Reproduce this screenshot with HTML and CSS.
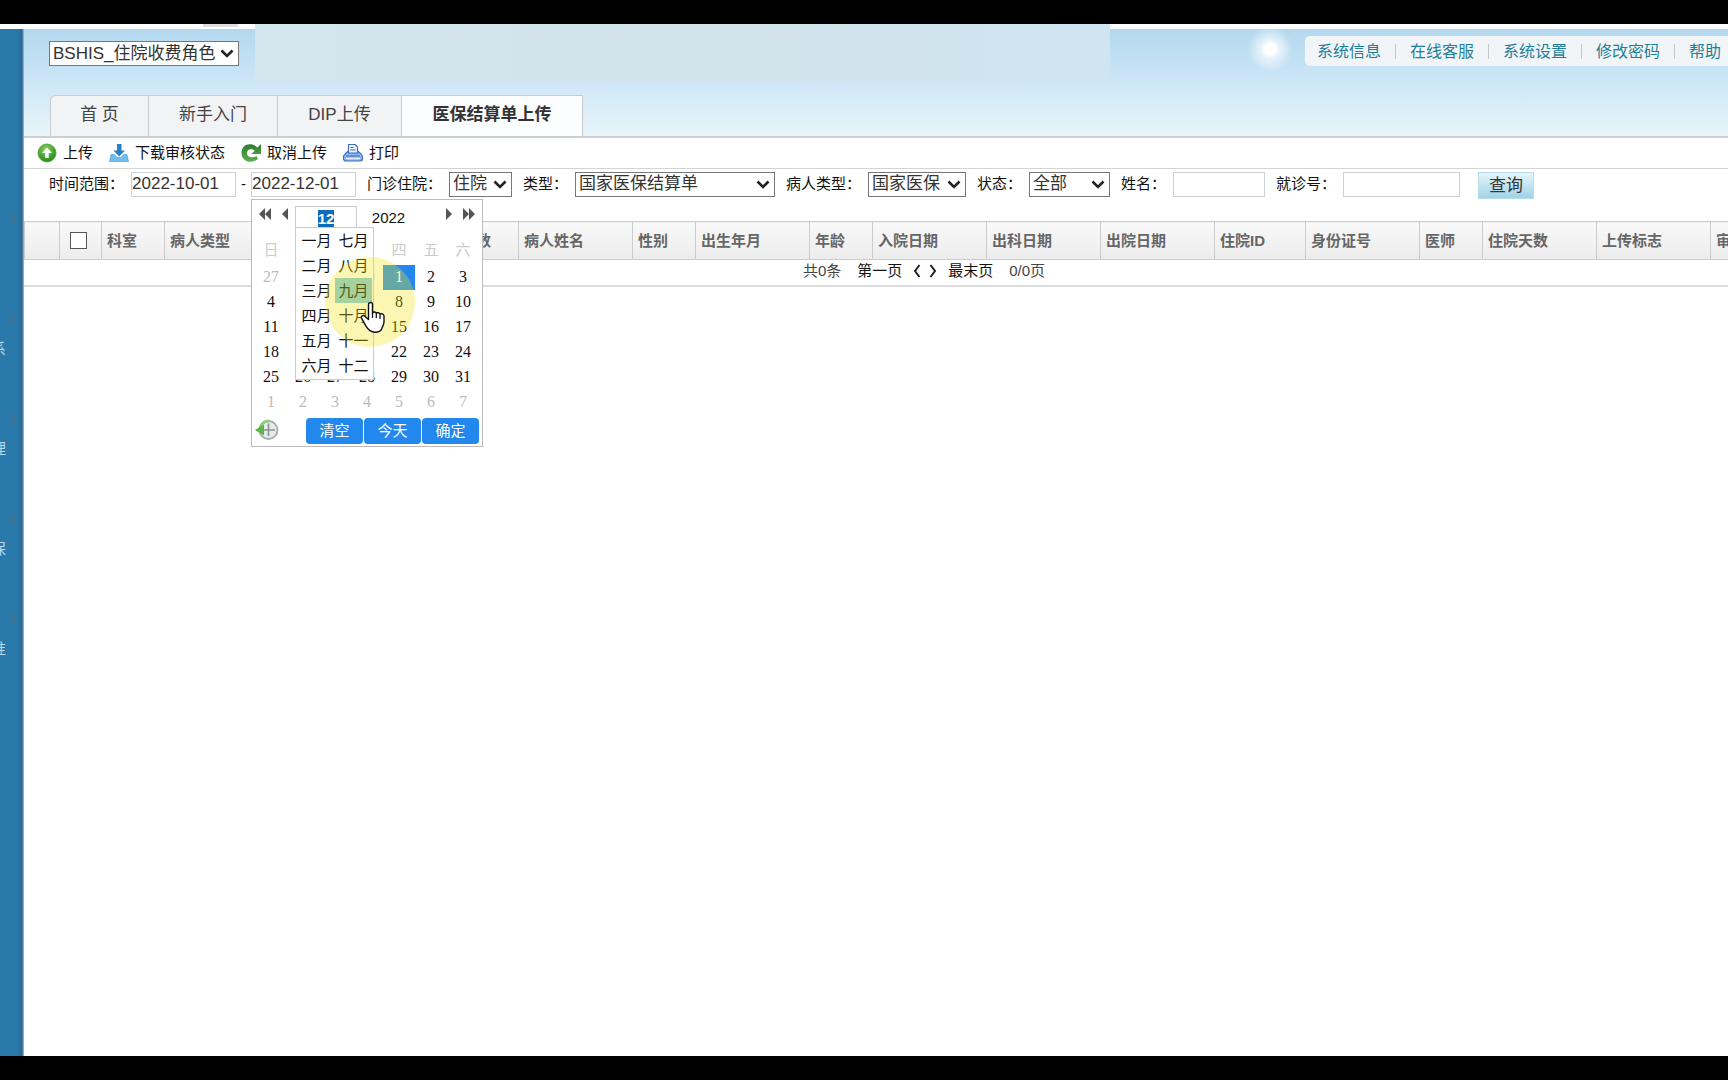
FILE: index.html
```html
<!DOCTYPE html>
<html lang="zh-CN">
<head>
<meta charset="utf-8">
<title>医保结算单上传</title>
<link rel="stylesheet" href="styles.css">
</head>
<body>
<div class="screen">
  <div class="strip"><span class="strip-tab"></span></div>
  <div class="shell">
    <nav class="side" aria-label="侧栏">
      <a href="#" class="side-item" aria-label="首页"></a>
      <a href="#" class="side-item"><span>系</span></a>
      <a href="#" class="side-item"><span>理</span></a>
      <a href="#" class="side-item"><span>保</span></a>
      <a href="#" class="side-item"><span>准</span></a>
    </nav>
    <main class="main">
      <header class="top">
        <div class="haze"></div>
        <div class="flare"></div>
        <div class="top-row">
          <select class="select role" aria-label="角色"><option>BSHIS_住院收费角色</option></select>
          <nav class="links" aria-label="系统">
            <a href="#">系统信息</a><a href="#">在线客服</a><a href="#">系统设置</a><a href="#">修改密码</a><a href="#">帮助</a>
          </nav>
        </div>
        <nav class="tabs" aria-label="页签">
          <a href="#" class="tab tab-home">首 页</a>
          <a href="#" class="tab tab-guide">新手入门</a>
          <a href="#" class="tab tab-dip">DIP上传</a>
          <a href="#" class="tab tab-on">医保结算单上传</a>
        </nav>
      </header>
      <div class="tools">
        <button type="button" class="tool">
          <svg viewBox="0 0 20 20"><defs><radialGradient id="g1" cx=".45" cy=".3" r=".8"><stop offset="0" stop-color="#8fd65a"/><stop offset=".6" stop-color="#3fa02c"/><stop offset="1" stop-color="#2a7d20"/></radialGradient></defs><circle cx="10" cy="10" r="9" fill="url(#g1)" stroke="#5aa84a"/><path d="M10 4.500 15 10h-3.300v5H8.300v-5H5z" fill="#fff"/></svg>上传</button>
        <button type="button" class="tool">
          <svg viewBox="0 0 20 20"><path d="M2 11.500h3.500L8 14.500h4l2.500-3H18l1.500 7H.5z" fill="#6fc0ee" stroke="#3a98d4" stroke-width=".6"/><path d="M8 1h4.500v6.500H16l-5.800 6L4.500 7.500H8z" fill="#2a80c8"/></svg>下载审核状态</button>
        <button type="button" class="tool">
          <svg viewBox="0 0 20 20"><defs><linearGradient id="g2" x1="0" y1="0" x2="0" y2="1"><stop offset="0" stop-color="#2c7a2e"/><stop offset="1" stop-color="#5db04f"/></linearGradient></defs><path d="M20 1v10h-9.500l3.200-3.300C10 4.800 5.800 6.800 6 10.500c.3 4 5.500 5 9.500 2.500l1.500 3C10 21.500.5 18.500.5 10 .5 1.500 10-1.500 16.500 4.500z" fill="url(#g2)"/></svg>取消上传</button>
        <button type="button" class="tool">
          <svg viewBox="0 0 20 20" stroke="#3f6fc0" stroke-width="1.200" stroke-linejoin="round"><path d="M2.500 10.500 5.500 8h9l3 2.500L19.500 13v3.500L18 18H2L.5 16.500V13z" fill="#8fb4ee"/><path d="M5.500 10V1.500h6.500L14.500 4v6z" fill="#eef5ff"/><path d="M7.500 4.500h3M7.500 7h5M3 13h14" fill="none"/><path d="M3 15.500h14" stroke="#e5effd" stroke-width="1.500"/></svg>打印</button>
      </div>
      <form class="filters">
        <div class="range">
          <div class="field"><label for="from">时间范围：</label><input id="from" class="box w-date" value="2022-10-01"></div>
          <span class="dash">-</span>
          <div class="picker">
            <input id="to" class="box w-date" value="2022-12-01" aria-label="结束日期">
            <div class="cal">
              <div class="cal-head">
                <button type="button" class="arrow" aria-label="上一年"><svg viewBox="0 0 12 12"><path d="M6 0v12L0 6zM12 0v12L6 6z"/></svg></button>
                <button type="button" class="arrow" aria-label="上一月"><svg viewBox="0 0 12 12"><path d="M9 0v12L3 6z"/></svg></button>
                <div class="month"><span class="month-val">12</span>
                  <div class="months">
                    <button type="button">一月</button><button type="button">七月</button>
                    <button type="button">二月</button><button type="button">八月</button>
                    <button type="button">三月</button><button type="button" class="hot">九月</button>
                    <button type="button">四月</button><button type="button">十月</button>
                    <button type="button">五月</button><button type="button">十一</button>
                    <button type="button">六月</button><button type="button">十二</button>
                  </div>
                </div>
                <span class="year">2022</span>
                <button type="button" class="arrow" aria-label="下一月"><svg viewBox="0 0 12 12"><path d="M3 0v12l6-6z"/></svg></button>
                <button type="button" class="arrow" aria-label="下一年"><svg viewBox="0 0 12 12"><path d="M0 0v12l6-6zM6 0v12l6-6z"/></svg></button>
              </div>
              <table class="days">
                <thead><tr><th>日</th><th>一</th><th>二</th><th>三</th><th>四</th><th>五</th><th>六</th></tr></thead>
                <tbody>
                  <tr><td class="dim">27</td><td class="dim">28</td><td class="dim">29</td><td class="dim">30</td><td class="sel">1</td><td>2</td><td>3</td></tr>
                  <tr><td>4</td><td>5</td><td>6</td><td>7</td><td>8</td><td>9</td><td>10</td></tr>
                  <tr><td>11</td><td>12</td><td>13</td><td>14</td><td>15</td><td>16</td><td>17</td></tr>
                  <tr><td>18</td><td>19</td><td>20</td><td>21</td><td>22</td><td>23</td><td>24</td></tr>
                  <tr><td>25</td><td>26</td><td>27</td><td>28</td><td>29</td><td>30</td><td>31</td></tr>
                  <tr class="dim"><td>1</td><td>2</td><td>3</td><td>4</td><td>5</td><td>6</td><td>7</td></tr>
                </tbody>
              </table>
              <div class="cal-foot">
                <svg class="clock" viewBox="0 0 24 22"><circle cx="13.500" cy="11" r="9" fill="#e6eaea" stroke="#a9afaf" stroke-width="2"/><path d="M13.500 4.500V17M8 11h12" fill="none" stroke="#8a9494" stroke-width="1.600"/><path d="M14 2A9 9 0 0 0 5.500 8" fill="none" stroke="#8fce7c" stroke-width="3"/><path d="M0 11 9 5.500v11z" fill="#58b545"/></svg>
                <button type="button">清空</button><button type="button">今天</button><button type="button">确定</button>
              </div>
              <div class="halo"></div>
              <svg class="hand" viewBox="0 0 26 32"><path d="M8.500 3.500a2 2 0 0 1 4 0V12c.5-1.500 3.500-1.300 3.800.4.800-1.200 3.400-.8 3.700.9 1-1 3.800-.6 4 1.400v6c0 3-1.500 4.500-2 6.500-1 3-3.500 4-7 4-5 0-7-2.500-9-6l-4.500-8c-.8-2 1.500-3.500 3.300-2l3.700 3.300z" fill="#fff" stroke="#111" stroke-width="1.400" stroke-linejoin="round"/><path d="M12.500 12v5M16.300 13v4M20 14v4" stroke="#111" stroke-width="1.300"/></svg>
            </div>
          </div>
        </div>
        <div class="field"><label for="kind">门诊住院：</label><select id="kind" class="select w-kind"><option>住院</option></select></div>
        <div class="field"><label for="type">类型：</label><select id="type" class="select w-type"><option>国家医保结算单</option></select></div>
        <div class="field"><label for="ptype">病人类型：</label><select id="ptype" class="select w-ptype"><option>国家医保</option></select></div>
        <div class="field"><label for="state">状态：</label><select id="state" class="select w-state"><option>全部</option></select></div>
        <div class="field"><label for="name">姓名：</label><input id="name" class="box w-name"></div>
        <div class="field"><label for="visit">就诊号：</label><input id="visit" class="box w-visit"></div>
        <button type="button" class="query">查询</button>
      </form>
      <div class="grid-wrap">
        <table class="grid">
          <colgroup><col class="c-num"><col class="c-check"><col class="c-2"><col class="c-4"><col class="c-4"><col class="c-2"><col class="c-2"><col class="c-4"><col class="c-2"><col class="c-4"><col class="c-2"><col class="c-4"><col class="c-4"><col class="c-4"><col class="c-id"><col class="c-4"><col class="c-2"><col class="c-4"><col class="c-4"><col class="c-4"></colgroup>
          <thead><tr><th></th><th><input type="checkbox" class="check" aria-label="全选"></th><th>科室</th><th>病人类型</th><th></th><th></th><th>次数</th><th>病人姓名</th><th>性别</th><th>出生年月</th><th>年龄</th><th>入院日期</th><th>出科日期</th><th>出院日期</th><th>住院ID</th><th>身份证号</th><th>医师</th><th>住院天数</th><th>上传标志</th><th>审核状态</th></tr></thead>
        </table>
        <div class="pager">
          <span class="count">共0条</span><a href="#">第一页</a>
          <span class="steps"><a href="#" aria-label="上一页"><svg viewBox="0 0 8 14"><path d="M6.500 1 2 7l4.500 6"/></svg></a><a href="#" aria-label="下一页"><svg viewBox="0 0 8 14"><path d="M1.500 1 6 7l-4.500 6"/></svg></a></span>
          <a href="#">最末页</a><span class="count">0/0页</span>
        </div>
      </div>
    </main>
  </div>
</div>
</body>
</html>
```
FILE: styles.css
```css
* { box-sizing: border-box; }
body {
  margin: 0;
  background: #000;
  color: #111;
  font: 15px/20px "Liberation Sans", "Noto Sans CJK SC", sans-serif;
}
a { color: inherit; text-decoration: none; }
button, input, select { font: inherit; color: inherit; }
button { padding: 0; border: 0; background: none; }

.screen {
  display: flex;
  flex-direction: column;
  height: 100vh;
  padding: 24px 0;
  overflow: hidden;
}
.strip { flex: none; height: 5px; padding-left: 203px; background: #fdfefe; }
.strip-tab { display: block; width: 35px; height: 3px; background: #dcdcdc; }
.shell { display: flex; flex: 1; min-height: 0; background: #fff; }

.side {
  flex: none;
  width: 24px;
  padding-top: 170px;
  overflow: hidden;
  background: linear-gradient(90deg, #2a79ab 0 18px, #2c6690 22px, #a9c8dc 24px);
  color: #b5d7ea;
}
.side-item { position: relative; display: flex; height: 100px; align-items: center; }
.side-item span { margin-left: -9px; }
.side-item::after {
  content: "";
  position: absolute;
  top: 16px;
  left: 7px;
  width: 6px;
  height: 6px;
  border: 2px solid #47708f;
  border-width: 2px 2px 0 0;
  transform: rotate(45deg);
}

.main { flex: 1; min-width: 0; display: flex; flex-direction: column; }

.top {
  position: relative;
  flex: none;
  display: flex;
  flex-direction: column;
  justify-content: space-between;
  height: 109px;
  border-bottom: 2px solid #cdd0d2;
  background: linear-gradient(#b3d8ee, #cbe5f6 45%, #e9f5fb);
}
.haze {
  position: absolute;
  top: -5px;
  left: 231px;
  width: 855px;
  height: 57px;
  background: linear-gradient(90deg, #d3e5ed, #d1e2ea 60%, #cfe6f2);
}
.flare {
  position: absolute;
  top: -5px;
  left: 1221px;
  width: 50px;
  height: 50px;
  background: radial-gradient(circle, #fff 0 5px, #ffffff99 10px, #ffffff00 23px);
}
.top-row {
  position: relative;
  display: flex;
  justify-content: space-between;
  align-items: flex-start;
  padding: 7px 0 0 25px;
}
.top-row .role { margin-top: 5px; width: 190px; }
.links {
  display: flex;
  align-items: center;
  height: 30px;
  padding: 2px 7px 0 12px;
  border-radius: 5px 0 0 5px;
  background: #f1f5f7;
  color: #1f7f99;
  font-size: 16px;
}
.links a + a::before {
  content: "";
  display: inline-block;
  width: 1px;
  height: 15px;
  margin: 0 14px;
  vertical-align: -2px;
  background: #c4c8ca;
}

.tabs { position: relative; display: flex; height: 41px; padding-left: 26px; }
.tab {
  display: flex;
  align-items: center;
  justify-content: center;
  padding-bottom: 2px;
  border: 1px solid #c6cbce;
  border-width: 1px 0 0 1px;
  background: #f2f3f4;
  color: #444;
  font-size: 17px;
}
.tab-home { width: 98px; border-top-left-radius: 6px; }
.tab-guide { width: 129px; }
.tab-dip { width: 124px; }
.tab-on {
  width: 182px;
  border-right-width: 1px;
  background: #fcfdfe;
  color: #333;
  font-weight: bold;
}

.tools {
  flex: none;
  display: flex;
  gap: 16px;
  height: 31px;
  padding-left: 13px;
  border-bottom: 1px solid #d4d4d4;
}
.tool { display: flex; align-items: center; gap: 6px; }
.tool svg { width: 20px; height: 20px; }

.filters {
  flex: none;
  display: flex;
  align-items: center;
  gap: 11px;
  height: 52px;
  padding: 0 0 22px 25px;
}
.range, .field { display: flex; align-items: center; }
.field { gap: 7px; }
.filters label, .dash { white-space: nowrap; }
.dash { padding: 0 5px; }
.box, .select {
  flex: none;
  height: 25px;
  margin: 0;
  border: 1px solid #cfd2d4;
  background: #fff;
  color: #333;
  font-size: 17px;
}
.box { padding: 0; }
.select {
  appearance: none;
  padding: 0 0 0 3px;
  border-color: #777;
  border-radius: 0;
  background: #fff url("data:image/svg+xml,%3Csvg xmlns='http://www.w3.org/2000/svg' viewBox='0 0 14 9'%3E%3Cpath d='M1.500 1.500 7 7l5.500-5.500' fill='none' stroke='%23222' stroke-width='2.600'/%3E%3C/svg%3E") right 4px center / 14px 9px no-repeat;
}
.w-date { width: 105px; }
.w-kind { width: 63px; }
.w-type { width: 200px; }
.w-ptype { width: 98px; }
.w-state { width: 81px; }
.w-name { width: 92px; }
.w-visit { width: 117px; }
.query {
  width: 56px;
  height: 27px;
  margin: 3px 0 0 7px;
  border: 1px solid #b9dcea;
  background: linear-gradient(#e6f5fa, #9fd3e8);
  color: #333;
  font-size: 17px;
}

.picker { position: relative; display: flex; }
.cal {
  position: absolute;
  z-index: 2;
  top: 27px;
  left: 0;
  width: 232px;
  padding: 6px 3px 2px;
  border: 1px solid #bbb;
  background: #fff;
}
.cal-head { display: flex; height: 32px; }
.arrow { width: 20px; height: 16px; }
.arrow svg { display: block; width: 12px; height: 12px; margin: auto; fill: #555; }
.month {
  position: relative;
  width: 62px;
  height: 24px;
  padding-top: 3px;
  border: 1px solid #ccc;
  line-height: 17px;
  text-align: center;
}
.month-val { display: inline-block; background: #0f6cbd; color: #fff; font-weight: bold; }
.year { width: 63px; margin-right: 19px; padding-top: 2px; text-align: center; }
.months {
  position: absolute;
  z-index: 1;
  top: 20px;
  left: -1px;
  display: grid;
  grid-template-columns: 37px 37px;
  grid-auto-rows: 25px;
  width: 79px;
  padding: 0 1px 1px 2px;
  border: 1px solid #ccc;
  background: #fff;
}
.months .hot { background: #81c9e1; }

.days {
  border-collapse: collapse;
  table-layout: fixed;
  width: 224px;
  font: 16px/25px "Liberation Serif", "Noto Sans CJK SC", serif;
  text-align: center;
}
.days th {
  height: 27px;
  padding: 0;
  color: #ccc;
  font-size: 15px;
  font-weight: normal;
  line-height: 25px;
  vertical-align: top;
}
.days td { height: 25px; padding: 0; line-height: 24px; }
.days .dim { color: #bbb; }
.days .sel { background: #2288ee; color: #fff; }
.cal-foot { display: flex; gap: 1px; padding-top: 3px; }
.clock { width: 24px; height: 22px; margin: 1px auto 0 0; }
.cal-foot button {
  width: 57px;
  height: 26px;
  border-radius: 4px;
  background: #2288ee;
  color: #fff;
}
.halo {
  position: absolute;
  z-index: 2;
  top: 57px;
  left: 73px;
  width: 90px;
  height: 90px;
  border-radius: 50%;
  background: rgba(244, 230, 20, .32);
}
.hand { position: absolute; z-index: 3; top: 101px; left: 108px; width: 26px; height: 32px; }

.grid-wrap { flex: none; overflow: hidden; }
.grid { border-collapse: collapse; table-layout: fixed; width: 1800px; }
.c-num { width: 35px; }
.c-check { width: 42px; }
.c-2 { width: 63px; }
.c-4 { width: 114px; }
.c-id { width: 91px; }
.grid th {
  height: 38px;
  padding: 0 5px;
  border: 1px solid #ccc;
  background: linear-gradient(#f9f9f9, #ececec);
  color: #666;
  font-weight: bold;
  text-align: left;
}
.check {
  appearance: none;
  display: block;
  width: 17px;
  height: 17px;
  margin: 0 5px;
  border: 1px solid #555;
  background: #fff;
}

.pager {
  display: flex;
  align-items: center;
  justify-content: center;
  gap: 16px;
  width: 1800px;
  height: 27px;
  padding-bottom: 4px;
  border-bottom: 2px solid #ddd;
}
.steps { display: flex; gap: 8px; margin: 0 -5px; }
.steps svg { display: block; width: 8px; height: 14px; fill: none; stroke: #222; stroke-width: 2; }
.count { color: #444; }
```
